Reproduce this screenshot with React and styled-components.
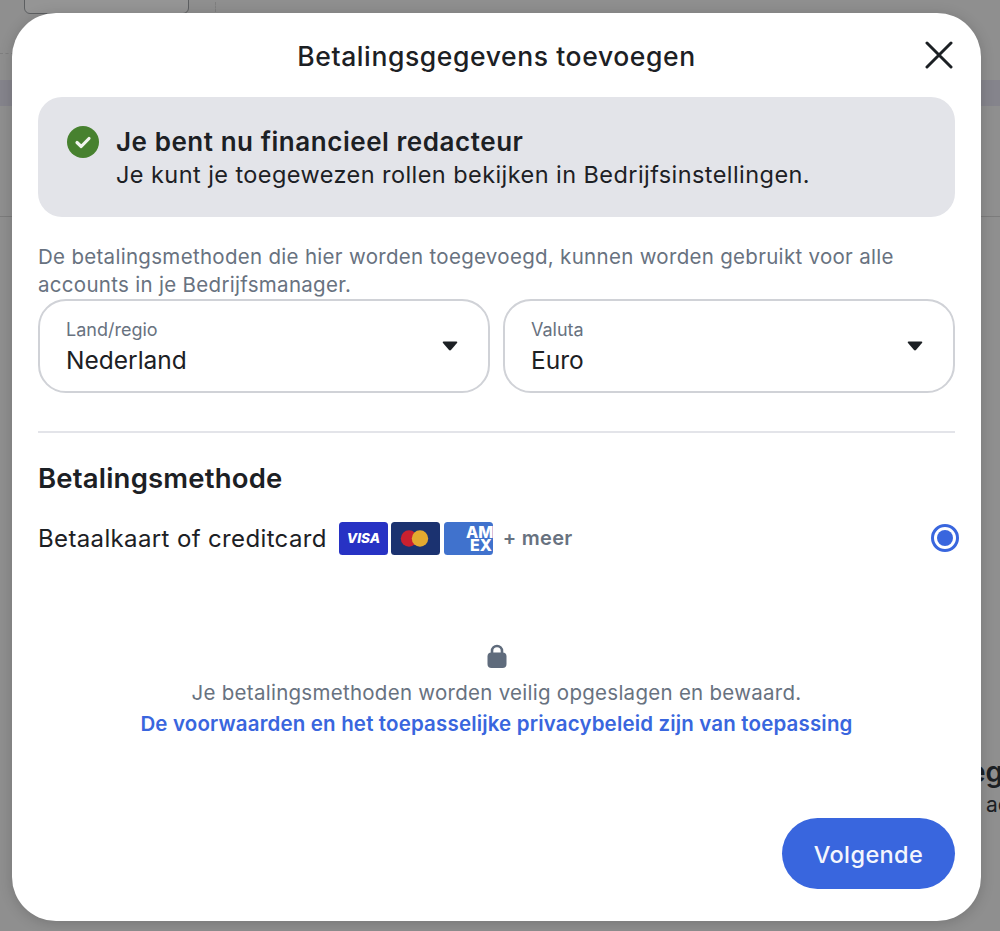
import React from "react";
import styled, { createGlobalStyle } from "styled-components";

const Global = createGlobalStyle`
  html, body { margin: 0; padding: 0; height: 931px; overflow: hidden; background: #8e8e8e; }
  body { font-family: Inter, "Noto Sans", "Liberation Sans", sans-serif; color: #1c2b33; }
`;
const Page = styled.div`
  position: relative; width: 1000px; height: 931px; overflow: hidden; background: #8f8f8f;
  padding: 13px 19px 10px 12px; box-sizing: border-box;
`;
const BehindBox = styled.div`
  position: absolute; left: 24px; top: -10px; width: 163px; height: 22px;
  border: 1px solid #5d5f61; border-radius: 6px; background: #959595;
`;
const BehindBand = styled.div`
  position: absolute; left: 0; right: 0; top: 80px; height: 26px; background: #85848c;
`;
const BehindLine = styled.div`
  position: absolute; left: 0; right: 0; top: 216px; height: 1px; background: #7c7c7c;
`;
const BehindDash = styled.div`
  position: absolute; left: 0; width: 14px; top: 53px; border-top: 1px dashed #7f7f7f;
`;
const BehindTick = styled.div`
  position: absolute; left: 215px; top: 2px; height: 10px; border-left: 1px dashed #7f7f7f;
`;
const BehindText = styled.div`
  position: absolute; left: ${p => p.$left}px; top: ${p => p.$top}px; font-size: ${p => p.$size}px;
  font-weight: ${p => p.$weight}; color: #1c2024; white-space: nowrap;
`;
const Modal = styled.section`
  position: relative; width: 969px; height: 908px; box-sizing: border-box; background: #fff;
  border-radius: 44px; padding: 0 26px; display: flex; flex-direction: column;
  box-shadow: 0 2px 14px rgba(0,0,0,.18);
`;
const Header = styled.header`
  height: 84px; display: flex; align-items: center; justify-content: center; position: relative;
`;
const Title = styled.h1`
  margin: 2px 0 0; font-size: 26.5px; font-weight: 500; color: #1c2024; letter-spacing: .6px;
`;
const Close = styled.button`
  position: absolute; right: 1px; top: 27px; width: 30px; height: 30px; padding: 0; border: 0;
  background: none; display: flex; align-items: center; justify-content: center;
`;
const Banner = styled.div`
  height: 120px; box-sizing: border-box; background: #e3e4e9; border-radius: 24px;
  padding: 29px 29px 0; display: flex; gap: 17px;
`;
const CheckWrap = styled.div`width: 32px; height: 32px; flex: none;`;
const BannerTitle = styled.div`
  font-size: 26px; font-weight: 600; line-height: 32px; color: #1c2024; letter-spacing: .55px;
`;
const BannerText = styled.div`
  font-size: 23.5px; line-height: 33px; color: #1c2024; letter-spacing: .43px;
`;
const Intro = styled.p`
  margin: 26px 0 0; font-size: 20.5px; line-height: 28px; color: #68727f; letter-spacing: .3px;
`;
const Fields = styled.div`display: grid; grid-template-columns: 452px 452px; gap: 13px;`;
const Field = styled.div`
  height: 94px; box-sizing: border-box; border: 2px solid #d0d2d7; border-radius: 28px;
  padding: 18px 26px 0; display: flex; justify-content: space-between;
`;
const FieldLabel = styled.div`font-size: 18px; line-height: 22px; color: #68727f;`;
const FieldValue = styled.div`font-size: 24.5px; line-height: 36px; color: #1c2024; margin-top: 1px;`;
const Caret = styled.svg`width: 16px; height: 10px; margin-top: 22px; margin-right: 4px;`;
const Divider = styled.hr`margin: 38px 0 0; border: 0; height: 2px; background: #e3e4e9;`;
const Heading = styled.h2`
  margin: 27px 0 0; font-size: 27.5px; line-height: 36px; font-weight: 600; color: #1c2024; letter-spacing: .2px;
`;
const MethodRow = styled.div`
  margin-top: 24px; height: 36px; display: flex; align-items: center; position: relative;
`;
const MethodLabel = styled.span`font-size: 24px; color: #1c2024; letter-spacing: .36px; margin-right: 12px;`;
const Cards = styled.div`display: flex; gap: 3.5px;`;
const More = styled.span`font-size: 20px; font-weight: 600; color: #68727f; margin-left: 10px; letter-spacing: .25px;`;
const Radio = styled.span`
  position: absolute; right: -4px; top: 4px; width: 28px; height: 28px; box-sizing: border-box;
  border: 3px solid #3966de; border-radius: 50%; display: flex; align-items: center; justify-content: center;
  &::after { content: ""; width: 16px; height: 16px; border-radius: 50%; background: #3966de; }
`;
const Secure = styled.div`
  margin-top: 87px; display: flex; flex-direction: column; align-items: center;
`;
const LockIcon = styled.svg`width: 24px; height: 26px; display: block;`;
const SecureText = styled.div`
  margin-top: 9px; font-size: 20.5px; line-height: 30px; color: #68727f; letter-spacing: .27px;
`;
const SecureLink = styled.a`
  margin-top: 1px; font-size: 20.5px; line-height: 30px; font-weight: 600; color: #3966de; letter-spacing: .16px;
`;
const Footer = styled.div`
  margin-top: auto; margin-bottom: 32px; display: flex; justify-content: flex-end;
`;
const Primary = styled.button`
  width: 173px; height: 71px; border: 0; border-radius: 36px; background: #3966de; color: #f4f6fd;
  font: 500 23.5px Inter, "Noto Sans", sans-serif; letter-spacing: .4px; padding: 2px 0 0;
`;

const Card = ({ children, bg }) => (
  <svg width="49" height="33" viewBox="0 0 49 33" role="img">
    <rect width="49" height="33" rx="3.5" fill={bg} />
    {children}
  </svg>
);

export default function App() {
  return (
    <Page>
      <Global />
      <BehindBox />
      <BehindTick />
      <BehindDash />
      <BehindBand />
      <BehindLine />
      <BehindText $left={969} $top={755} $size={28} $weight={600}>eg</BehindText>
      <BehindText $left={986} $top={792} $size={21} $weight={400}>ac</BehindText>
      <Modal>
        <Header>
          <Title>Betalingsgegevens toevoegen</Title>
          <Close aria-label="Sluiten">
            <svg width="28" height="28" viewBox="0 0 28 28" fill="none" stroke="#1c2024" strokeWidth="3" strokeLinecap="round">
              <path d="M2 2 L26 26 M26 2 L2 26" />
            </svg>
          </Close>
        </Header>
        <Banner>
          <CheckWrap>
            <svg width="32" height="32" viewBox="0 0 32 32">
              <circle cx="16" cy="16" r="16" fill="#47812f" />
              <path d="M10 16.5 L14.2 20.5 L22 12.5" fill="none" stroke="#f1f4ee" strokeWidth="3.2" strokeLinecap="round" strokeLinejoin="round" />
            </svg>
          </CheckWrap>
          <div>
            <BannerTitle>Je bent nu financieel redacteur</BannerTitle>
            <BannerText>Je kunt je toegewezen rollen bekijken in Bedrijfsinstellingen.</BannerText>
          </div>
        </Banner>
        <Intro>De betalingsmethoden die hier worden toegevoegd, kunnen worden gebruikt voor alle accounts in je Bedrijfsmanager.</Intro>
        <Fields>
          {[["Land/regio", "Nederland"], ["Valuta", "Euro"]].map(([label, value]) => (
            <Field key={label}>
              <div>
                <FieldLabel>{label}</FieldLabel>
                <FieldValue>{value}</FieldValue>
              </div>
              <Caret viewBox="0 0 16 10"><path d="M1.5 0.5 H14.5 Q16 0.5 15 2 L9.2 8.8 Q8 10 6.8 8.8 L1 2 Q0 0.5 1.5 0.5 Z" fill="#1c2024" /></Caret>
            </Field>
          ))}
        </Fields>
        <Divider />
        <Heading>Betalingsmethode</Heading>
        <MethodRow>
          <MethodLabel>Betaalkaart of creditcard</MethodLabel>
          <Cards>
            <Card bg="#2732c4">
              <text x="24.5" y="21" textAnchor="middle" fontFamily="Inter, sans-serif" fontSize="13.5" fontWeight="800" fontStyle="italic" fill="#fff">VISA</text>
            </Card>
            <Card bg="#1b3270">
              <circle cx="18" cy="16.5" r="8.2" fill="#c9202f" />
              <circle cx="29" cy="16.5" r="8.2" fill="#e3a92f" />
            </Card>
            <Card bg="#4072cd">
              <g fontFamily="Inter, sans-serif" fontSize="16" fontWeight="800" fill="#fff">
                <text x="22" y="16">AM</text>
                <text x="26" y="29">EX</text>
              </g>
            </Card>
          </Cards>
          <More>+ meer</More>
          <Radio />
        </MethodRow>
        <Secure>
          <LockIcon viewBox="0 0 24 26">
            <path d="M7 11 V8 a5 5 0 0 1 10 0 V11" fill="none" stroke="#5f6b7c" strokeWidth="2.6" />
            <rect x="2.5" y="9.5" width="19" height="15.5" rx="4" fill="#5f6b7c" />
          </LockIcon>
          <SecureText>Je betalingsmethoden worden veilig opgeslagen en bewaard.</SecureText>
          <SecureLink>De voorwaarden en het toepasselijke privacybeleid zijn van toepassing</SecureLink>
        </Secure>
        <Footer><Primary>Volgende</Primary></Footer>
      </Modal>
    </Page>
  );
}
